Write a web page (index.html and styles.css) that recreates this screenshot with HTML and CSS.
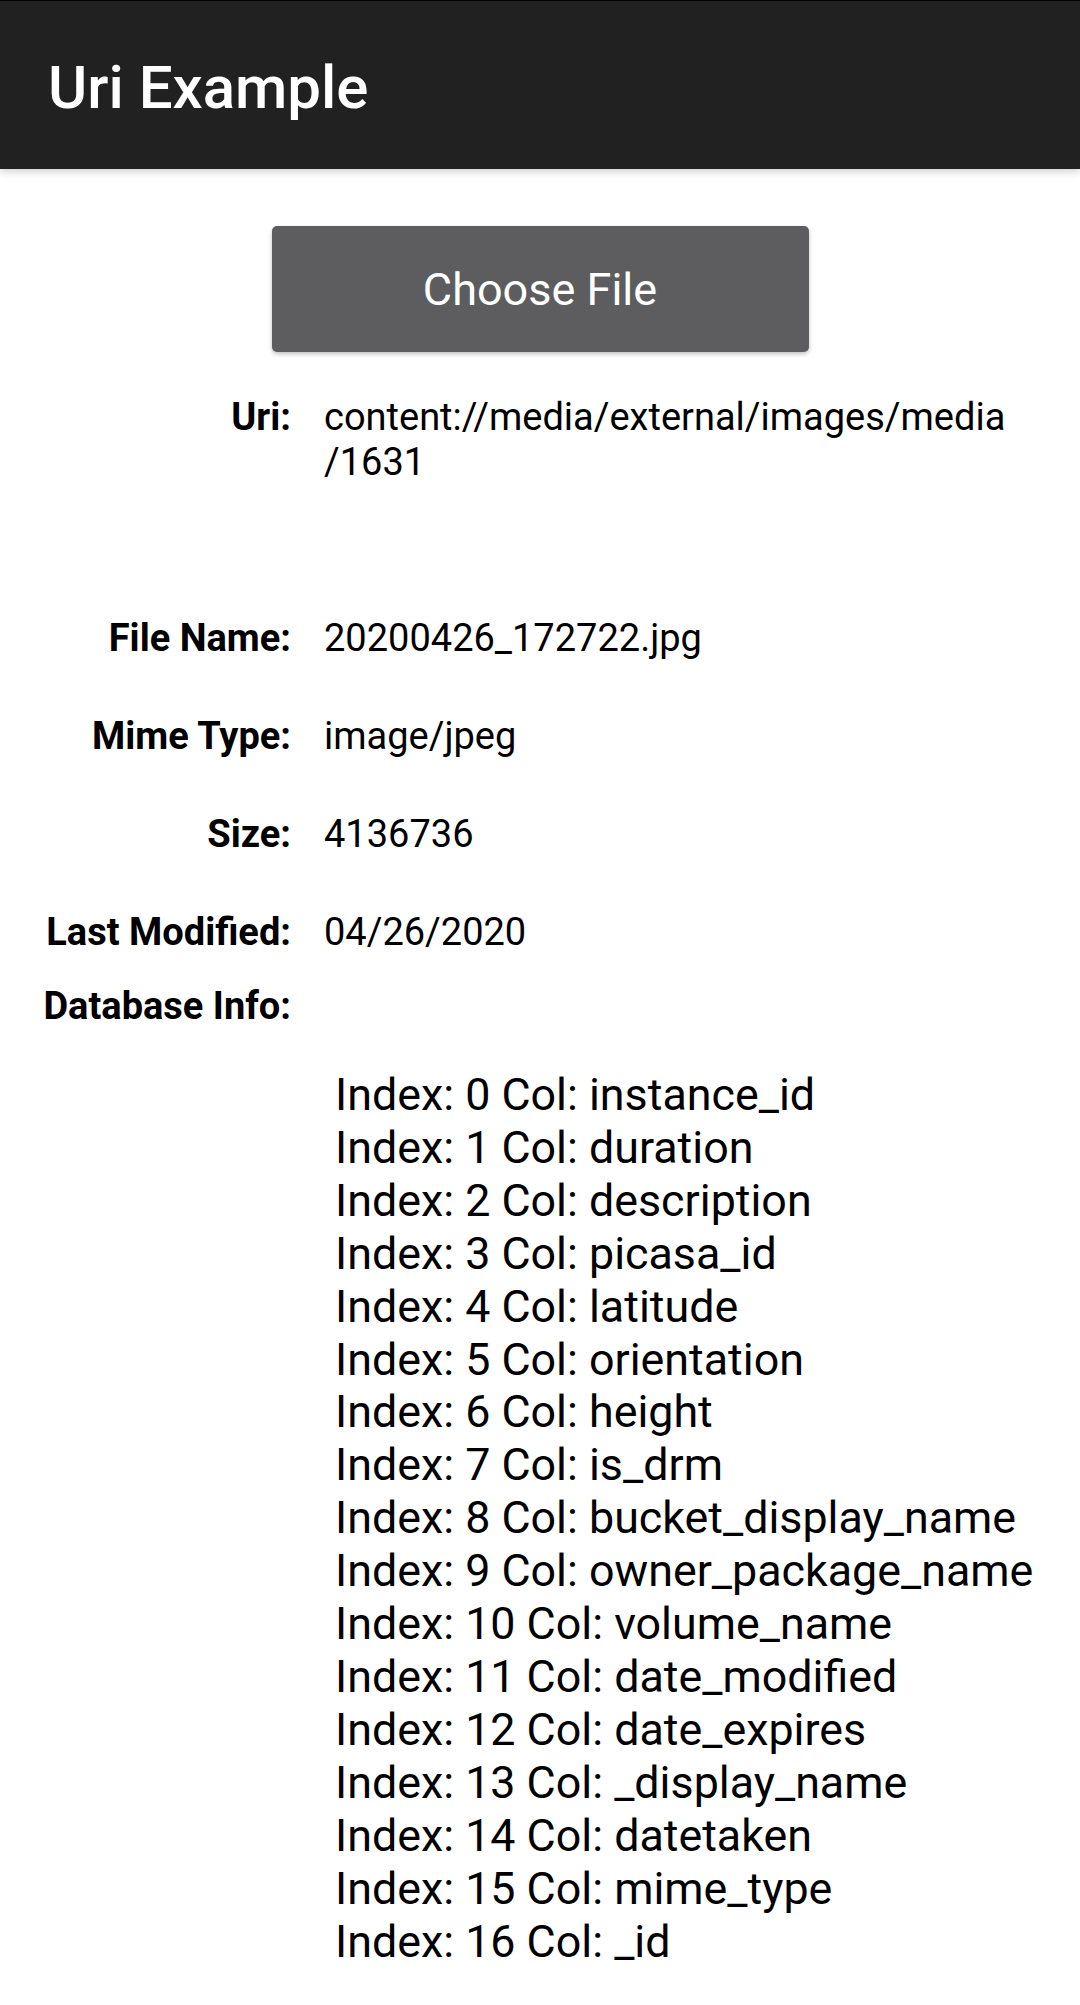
FILE: index.html
```html
<!DOCTYPE html>
<html lang="en">
<head>
<meta charset="utf-8">
<title>Uri Example</title>
<link rel="stylesheet" href="styles.css">
</head>
<body>
<header class="appbar">
  <h1 class="title">Uri Example</h1>
</header>
<main class="content">
  <div class="actions">
    <button class="choose" type="button">Choose File</button>
  </div>
  <section class="fields">
    <div class="field field-uri">
      <span class="label">Uri:</span>
      <span class="value">content://media/external/images/media<wbr>/1631</span>
    </div>
    <div class="field field-file">
      <span class="label">File Name:</span>
      <span class="value">20200426_172722.jpg</span>
    </div>
    <div class="field">
      <span class="label">Mime Type:</span>
      <span class="value">image/jpeg</span>
    </div>
    <div class="field">
      <span class="label">Size:</span>
      <span class="value">4136736</span>
    </div>
    <div class="field">
      <span class="label">Last Modified:</span>
      <span class="value">04/26/2020</span>
    </div>
    <div class="field field-db">
      <span class="label">Database Info:</span>
      <span class="value"></span>
    </div>
  </section>
  <div class="db-list">
    <div class="db-line">Index: 0 Col: instance_id</div>
    <div class="db-line">Index: 1 Col: duration</div>
    <div class="db-line">Index: 2 Col: description</div>
    <div class="db-line">Index: 3 Col: picasa_id</div>
    <div class="db-line">Index: 4 Col: latitude</div>
    <div class="db-line">Index: 5 Col: orientation</div>
    <div class="db-line">Index: 6 Col: height</div>
    <div class="db-line">Index: 7 Col: is_drm</div>
    <div class="db-line">Index: 8 Col: bucket_display_name</div>
    <div class="db-line">Index: 9 Col: owner_package_name</div>
    <div class="db-line">Index: 10 Col: volume_name</div>
    <div class="db-line">Index: 11 Col: date_modified</div>
    <div class="db-line">Index: 12 Col: date_expires</div>
    <div class="db-line">Index: 13 Col: _display_name</div>
    <div class="db-line">Index: 14 Col: datetaken</div>
    <div class="db-line">Index: 15 Col: mime_type</div>
    <div class="db-line">Index: 16 Col: _id</div>
  </div>
</main>
</body>
</html>
```
FILE: styles.css
```css
html, body {
  margin: 0;
  padding: 0;
  background: #ffffff;
}

body {
  font-family: Roboto, "Liberation Sans", Arial, sans-serif;
  color: #000000;
  width: 1080px;
  min-height: 2005px;
}

.appbar {
  height: 168px;
  background: #212121;
  border-top: 1px solid #000000;
  box-shadow: 0 3px 8px rgba(0, 0, 0, 0.18);
  display: flex;
  align-items: center;
  padding-left: 48px;
  position: relative;
}

.title {
  margin: 0;
  color: #ffffff;
  font-size: 60px;
  font-weight: 500;
  line-height: 70px;
  padding-top: 5px;
}

.content {
  display: flex;
  flex-direction: column;
}

.actions {
  display: flex;
  justify-content: center;
  margin-top: 57px;
}

.choose {
  width: 537px;
  height: 126px;
  background: #5d5d5f;
  color: #ffffff;
  border: none;
  border-radius: 5px;
  font-family: Roboto, "Liberation Sans", Arial, sans-serif;
  font-size: 45px;
  font-weight: 400;
  box-shadow: 0 2px 4px rgba(0, 0, 0, 0.25);
  padding: 0;
}

.fields {
  display: flex;
  flex-direction: column;
  margin-top: 43px;
}

.field {
  display: grid;
  grid-template-columns: 291px 1fr;
  column-gap: 33px;
  font-size: 38px;
  line-height: 44.5px;
  padding-right: 40px;
}

.field + .field {
  margin-top: 53.5px;
}

.field.field-file {
  margin-top: 132px;
}

.field.field-db {
  margin-top: 29.5px;
}

.label {
  text-align: right;
  font-weight: 700;
  white-space: nowrap;
}

.value {
  font-weight: 400;
}

.db-list {
  margin-top: 40.5px;
  padding-left: 335px;
  font-size: 44.8px;
  line-height: 52.9px;
}

.db-line {
  white-space: nowrap;
}
```
